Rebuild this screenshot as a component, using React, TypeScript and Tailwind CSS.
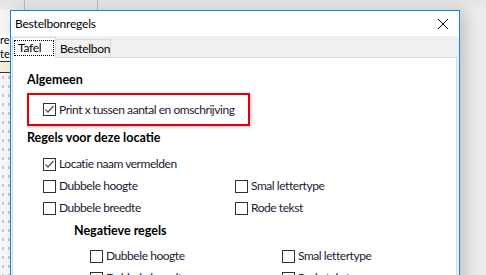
const Box = ({ checked }: { checked?: boolean }) => (
  <span className="w-[13px] h-[13px] border border-[#333] bg-white flex items-center justify-center shrink-0">
    {checked && (
      <svg width="11" height="11" viewBox="0 0 11 11">
        <path d="M1.5 5.5 L4 8 L9.5 2" fill="none" stroke="#555" strokeWidth="1.3" />
      </svg>
    )}
  </span>
);

const Check = ({ label, checked }: { label: string; checked?: boolean }) => (
  <div className="flex items-center gap-[3px] h-[22px] whitespace-nowrap">
    <Box checked={checked} />
    <span className="text-[#1a1a33] text-[12px] tracking-[-0.45px]">{label}</span>
  </div>
);

export default function App() {
  return (
    <div
      className="relative w-[486px] h-[275px] overflow-hidden bg-[#ededed] text-[12.5px]"
      style={{ fontFamily: 'Lato, "Noto Sans", sans-serif' }}
    >
      {/* achterliggend venster */}
      <div className="flex h-[10px] bg-gradient-to-b from-[#e4e4e4] to-[#ececec]">
        <div className="w-[25px] border-r border-[#bbb]" />
        <div className="w-[73px] border-r border-[#bbb]" />
      </div>
      <div className="w-[10px] h-[265px] flex flex-col">
        <div className="h-[23px] bg-[#f4f4f4]" />
        <div className="h-[14px] bg-white text-[11px] leading-[14px] overflow-hidden">re</div>
        <div className="h-[14px] bg-white text-[11px] leading-[14px] overflow-hidden">te</div>
        <div className="h-[12px] bg-[#f4f1d8] border-y border-[#333]" />
        <div className="flex-1 bg-[#f7f7f7] bg-[radial-gradient(#c8c8c8_1px,transparent_1px)] bg-[length:6px_9px]" />
      </div>

      {/* dialoog */}
      <div className="absolute left-[10px] top-[10px] w-[450px] h-[300px] border border-[#1883d7] bg-[#f0f0f0] shadow-[6px_0_14px_rgba(0,0,0,0.18)] flex flex-col">
        <div className="h-[25px] bg-white flex items-center justify-between pl-[4px] pr-[10px] shrink-0">
          <span className="text-black text-[12px] tracking-[-0.2px]">Bestelbonregels</span>
          <svg width="12" height="12" viewBox="0 0 12 12">
            <path d="M1 1 L11 11 M11 1 L1 11" stroke="#111" strokeWidth="1" />
          </svg>
        </div>
        <div className="flex items-end pl-[1px] h-[21px] shrink-0 text-[12px] tracking-[-0.3px]">
          <div className="h-[21px] w-[44px] px-px bg-white border border-b-0 border-[#d9d9d9] flex items-center relative z-10 -mb-px">
            <span className="w-[40px] h-[16px] border border-dotted border-black pl-[3px] leading-[14px] text-black">Tafel</span>
          </div>
          <div className="h-[18px] w-[55px] pl-[4px] border border-b-0 border-l-0 border-[#d9d9d9] flex items-center text-black">
            Bestelbon
          </div>
        </div>
        <div className="flex-1 ml-[1px] mr-[2px] bg-white border border-[#d9d9d9] pl-[14px] pt-[14px]">
          <div className="font-bold text-black leading-[16px]">Algemeen</div>
          <div className="mt-[5px] w-[223px] h-[33px] border-2 border-[#e0000d] shadow-[1px_1px_3px_rgba(0,0,0,0.25)] flex items-center pl-[14px]">
            <Check label="Print x tussen aantal en omschrijving" checked />
          </div>
          <div className="font-bold text-black leading-[16px] mt-[4px]">Regels voor deze locatie</div>
          <div className="pl-[16px] mt-[7px]">
            <Check label="Locatie naam vermelden" checked />
            <div className="grid grid-cols-[192px_1fr]">
              <Check label="Dubbele hoogte" />
              <Check label="Smal lettertype" />
              <Check label="Dubbele breedte" />
              <Check label="Rode tekst" />
            </div>
            <div className="pl-[31px]">
              <div className="font-bold text-black leading-[16px] mt-[4px]">Negatieve regels</div>
              <div className="pl-[16px] mt-[6px] grid grid-cols-[192px_1fr]">
                <Check label="Dubbele hoogte" />
                <Check label="Smal lettertype" />
                <Check label="Dubbele breedte" />
                <Check label="Rode tekst" />
              </div>
            </div>
          </div>
        </div>
      </div>
    </div>
  );
}
